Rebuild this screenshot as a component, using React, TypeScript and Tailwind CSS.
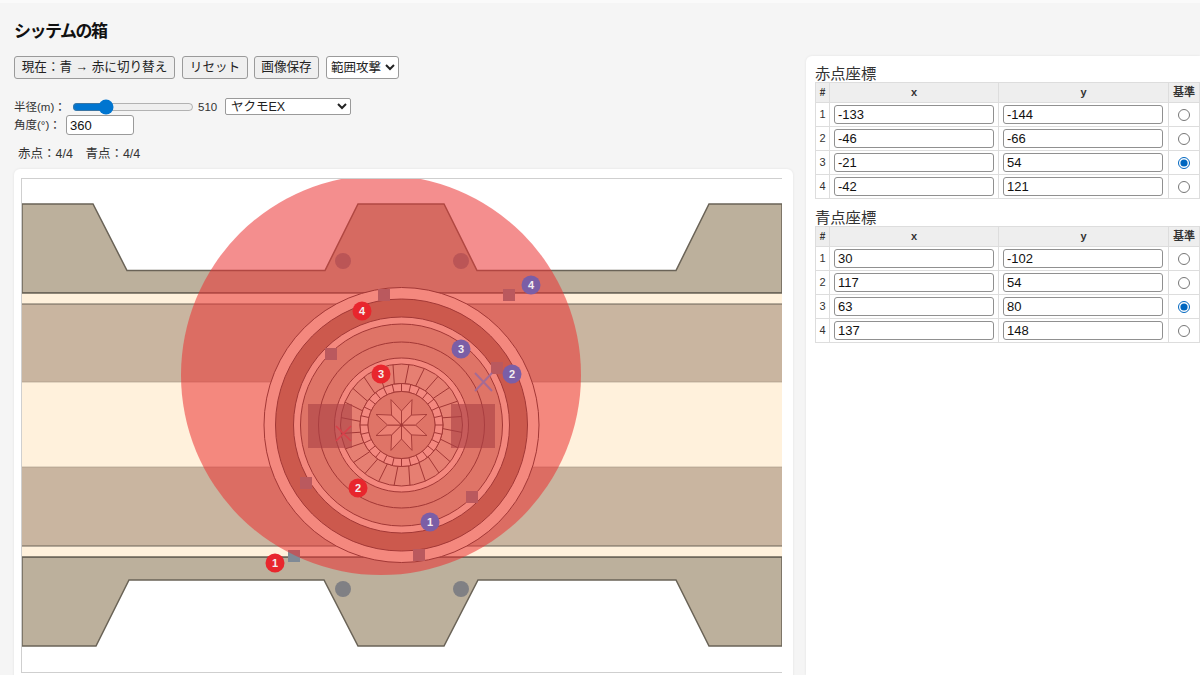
import React from "react";

const FONT = "font-['Liberation_Sans','Noto_Sans_CJK_JP',sans-serif]";
const CX = 401.5;
const CY = 425;
const LINE = "#4a3f3a";

function polar(r: number, deg: number) {
  const a = (deg * Math.PI) / 180;
  return [CX + r * Math.cos(a), CY + r * Math.sin(a)];
}

function Rounded({ r, fill }: { r: number; fill: string }) {
  return <circle cx={CX} cy={CY} r={r} fill={fill} stroke={LINE} strokeWidth={1} />;
}

function Tiles() {
  const spokes = Array.from({ length: 24 }, (_, i) => i * 15 + 5);
  const small = Array.from({ length: 28 }, (_, i) => (i * 360) / 28);
  return (
    <g>
      {spokes.map((d) => {
        const [x1, y1] = polar(41.5, d);
        const [x2, y2] = polar(61, d + 2);
        return <line key={d} x1={x1} y1={y1} x2={x2} y2={y2} stroke={LINE} strokeWidth={1} />;
      })}
      <circle cx={CX} cy={CY} r={37.5} fill="none" stroke="#fff4e0" strokeWidth={7.5} />
      <circle cx={CX} cy={CY} r={41.5} fill="none" stroke={LINE} strokeWidth={0.9} />
      <circle cx={CX} cy={CY} r={33.5} fill="none" stroke={LINE} strokeWidth={0.9} />
      {small.map((d) => {
        const [x1, y1] = polar(33.5, d);
        const [x2, y2] = polar(41.5, d);
        return <line key={d} x1={x1} y1={y1} x2={x2} y2={y2} stroke={LINE} strokeWidth={1} />;
      })}
    </g>
  );
}

function Star() {
  const pts = Array.from({ length: 8 }, (_, i) => i * 45 + 22.5);
  return (
    <g>
      {pts.map((d) => {
        const [tx, ty] = polar(27.5, d);
        const [lx, ly] = polar(14, d - 22.5);
        const [rx, ry] = polar(14, d + 22.5);
        return (
          <path
            key={d}
            d={`M${CX} ${CY}L${lx} ${ly}L${tx} ${ty}L${rx} ${ry}Z`}
            fill="#eee5c8"
            stroke={LINE}
            strokeWidth={0.9}
            strokeLinejoin="round"
          />
        );
      })}
      <circle cx={CX} cy={CY} r={1.5} fill={LINE} />
    </g>
  );
}

function Marker({ x, y, n, c }: { x: number; y: number; n: number; c: string }) {
  return (
    <g>
      <circle cx={x} cy={y} r={9.5} fill={c} />
      <text
        x={x}
        y={y + 3.8}
        textAnchor="middle"
        fontSize={11}
        fontWeight={700}
        fill="#f4eef0"
        fontFamily="'Liberation Sans',sans-serif"
      >
        {n}
      </text>
    </g>
  );
}

function Arena() {
  const squares = [
    [384, 295],
    [509, 295],
    [331, 354],
    [497, 368],
    [472, 497],
    [306, 483],
    [419, 555],
    [294, 556],
  ];
  const dots = [
    [343, 261],
    [461, 261],
    [343, 589],
    [461, 589],
  ];
  return (
    <svg viewBox="22 179 760 493" width={760} height={493} className="block">
      <rect x={22} y={179} width={760} height={493} fill="#fff" />
      <path
        d="M22 204H93L127 270.500H325L358 204H444L477 270.500H676L709 204H782V293H22Z"
        fill="#bcb09c"
        stroke="#6a6357"
        strokeWidth={1.5}
      />
      <path
        d="M22 646H96L129 580H324L358 646H444L478 580H676L709 646H782V557H22Z"
        fill="#bcb09c"
        stroke="#6a6357"
        strokeWidth={1.5}
      />
      <rect x={22} y={293} width={760} height={11} fill="#fff1dc" />
      <rect x={22} y={304} width={760} height={78} fill="#c9b5a0" />
      <rect x={22} y={382} width={760} height={85} fill="#fff1dc" />
      <rect x={22} y={467} width={760} height={79} fill="#c9b5a0" />
      <rect x={22} y={546} width={760} height={11} fill="#fff1dc" />
      {[293, 304, 546, 557].map((y) => (
        <line key={y} x1={22} x2={782} y1={y} y2={y} stroke="#6a6357" strokeWidth={y === 293 || y === 557 ? 1.6 : 1} />
      ))}
      {[382, 467].map((y) => (
        <line key={y} x1={22} x2={782} y1={y} y2={y} stroke="#a39684" strokeWidth={0.6} />
      ))}
      {dots.map(([x, y]) => (
        <circle key={x + "-" + y} cx={x} cy={y} r={8} fill="#808084" />
      ))}
      <Rounded r={137.5} fill="#fff1dc" />
      <Rounded r={126} fill="#a78b70" />
      <Rounded r={108} fill="#fff1dc" />
      <Rounded r={101} fill="#d1c5a8" />
      <Rounded r={83} fill="#d1c5a8" />
      <Rounded r={67} fill="#fff1dc" />
      <Rounded r={61} fill="#e0ddc0" />
      <Rounded r={41.5} fill="#e0ddc0" />
      <Tiles />
      <circle cx={CX} cy={CY} r={33.5} fill="#d1c5a8" stroke={LINE} strokeWidth={0.9} />
      <Star />
      <rect x={308} y={404} width={44} height={44} fill="#5f5560" fillOpacity={0.62} />
      <rect x={451} y={404} width={44} height={44} fill="#5f5560" fillOpacity={0.62} />
      {squares.map(([x, y]) => (
        <rect key={x} x={x - 6} y={y - 6} width={12} height={12} fill="#7f8a96" />
      ))}
      <circle cx={381} cy={375} r={200} fill="#eb3232" fillOpacity={0.55} />
      <path d="M336 426L351 441M351 426L336 441" stroke="#d8404a" strokeWidth={1.6} />
      <path d="M475 373L492 391M492 373L475 391" stroke="#9c6a9c" strokeWidth={2} opacity={0.85} />
      <Marker x={275} y={563} n={1} c="#e8262d" />
      <Marker x={358} y={488} n={2} c="#e8262d" />
      <Marker x={381} y={374} n={3} c="#e8262d" />
      <Marker x={362} y={311} n={4} c="#e8262d" />
      <Marker x={430} y={522} n={1} c="#7b5ea6" />
      <Marker x={512} y={374} n={2} c="#7b5ea6" />
      <Marker x={461} y={349} n={3} c="#7b5ea6" />
      <Marker x={531} y={285} n={4} c="#7b5ea6" />
    </svg>
  );
}

function Btn({ children, w }: { children: React.ReactNode; w: string }) {
  return (
    <button
      className={`h-[23px] ${w} bg-[#efefef] border border-[#9a9a9a] rounded-[3px] text-[12.6px] text-[#222] flex items-center justify-center`}
    >
      {children}
    </button>
  );
}

function CoordTable({
  title,
  rows,
  top,
}: {
  title: string;
  rows: [number, number][];
  top: string;
}) {
  return (
    <div className={top}>
      <div className="text-[15.3px] leading-[17px] text-[#333]">{title}</div>
      <table className="w-[384px] table-fixed border-collapse text-[#333]">
        <colgroup>
          <col className="w-[14px]" />
          <col className="w-[169px]" />
          <col className="w-[170px]" />
          <col className="w-[31px]" />
        </colgroup>
        <thead>
          <tr className="h-[20px] bg-[#eeeeee] text-[11px] font-bold">
            <th className="border border-[#dddddd] p-0 text-[10px]">#</th>
            <th className="border border-[#dddddd] p-0">x</th>
            <th className="border border-[#dddddd] p-0">y</th>
            <th className="border border-[#dddddd] p-0">基準</th>
          </tr>
        </thead>
        <tbody>
          {rows.map(([x, y], i) => (
            <tr key={i} className="h-[24px]">
              <td className="border border-[#dddddd] p-0 text-center text-[11px]">{i + 1}</td>
              <td className="border border-[#dddddd] p-0 pl-[4px]">
                <input
                  readOnly
                  value={x}
                  className="block h-[19.5px] w-[160px] bg-white border border-[#909090] rounded-[3px] px-[3px] text-[13px] text-[#111]"
                />
              </td>
              <td className="border border-[#dddddd] p-0 pl-[4px]">
                <input
                  readOnly
                  value={y}
                  className="block h-[19.5px] w-[160px] bg-white border border-[#909090] rounded-[3px] px-[3px] text-[13px] text-[#111]"
                />
              </td>
              <td className="border border-[#dddddd] p-0">
                <div className="flex items-center justify-center">
                  <input
                    type="radio"
                    readOnly
                    checked={i === 2}
                    className="m-0 h-[12px] w-[12px] accent-[#0067c0]"
                  />
                </div>
              </td>
            </tr>
          ))}
        </tbody>
      </table>
    </div>
  );
}

export default function App() {
  return (
    <div className={`${FONT} h-[675px] w-[1200px] overflow-hidden bg-[#f5f5f5] border-t-[3px] border-[#fafafa] flex`}>
      <div className="w-[806px] shrink-0 pl-[14px] pt-[17px]">
        <h1 className="text-[17px] leading-[24px] font-bold tracking-[-1.5px] text-[#111]">シッテムの箱</h1>
        <div className="mt-[12px] flex gap-[6px]">
          <div className="mr-[1px]"><Btn w="w-[161px]">現在：青 → 赤に切り替え</Btn></div>
          <Btn w="w-[66px]">リセット</Btn>
          <div className="mr-[1px]"><Btn w="w-[65px]">画像保存</Btn></div>
          <select className="h-[23px] w-[73px] bg-white border border-[#9a9a9a] rounded-[3px] text-[12.5px] text-[#222]">
            <option>範囲攻撃</option>
          </select>
        </div>
        <div className="mt-[19px] flex items-center h-[17px] text-[11.5px] text-[#333]">
          <span className="w-[58px] pt-[2px]">半径(m)：</span>
          <input
            type="range"
            readOnly
            min={0}
            max={2080}
            value={510}
            className="w-[122px] h-[14px] m-0 accent-[#0075d0]"
          />
          <span className="ml-[4px] w-[27px] pt-[2px]">510</span>
          <select className="h-[17px] w-[126px] bg-white border border-[#9a9a9a] rounded-[2px] text-[12.5px] text-[#222] pl-[1px]">
            <option>ヤクモEX</option>
          </select>
        </div>
        <div className="flex items-center h-[20px] text-[11.5px] text-[#333]">
          <span className="w-[52px] pt-[2px]">角度(°)：</span>
          <input
            readOnly
            value="360"
            className="h-[20px] w-[68px] bg-white border border-[#9a9a9a] rounded-[3px] px-[3px] text-[13px] text-[#111]"
          />
        </div>
        <div className="mt-[10px] pl-[4px] h-[18px] text-[12.5px] leading-[18px] text-[#333]">
          赤点：4/4　青点：4/4
        </div>
        <div className="mt-[6px] w-[779px] bg-white rounded-[6px] pt-[9px] px-[7px] shadow-[0_0_3px_rgba(0,0,0,0.08)] h-[520px]">
          <div className="w-[761px] border border-[#cfcfcf]">
            <Arena />
          </div>
        </div>
      </div>
      <div className="flex-1 mt-[53px] bg-white rounded-tl-[6px] shadow-[0_0_3px_rgba(0,0,0,0.08)] pl-[9px] pt-[9px]">
        <CoordTable
          title="赤点座標"
          top=""
          rows={[
            [-133, -144],
            [-46, -66],
            [-21, 54],
            [-42, 121],
          ]}
        />
        <CoordTable
          title="青点座標"
          top="mt-[10px]"
          rows={[
            [30, -102],
            [117, 54],
            [63, 80],
            [137, 148],
          ]}
        />
      </div>
    </div>
  );
}
